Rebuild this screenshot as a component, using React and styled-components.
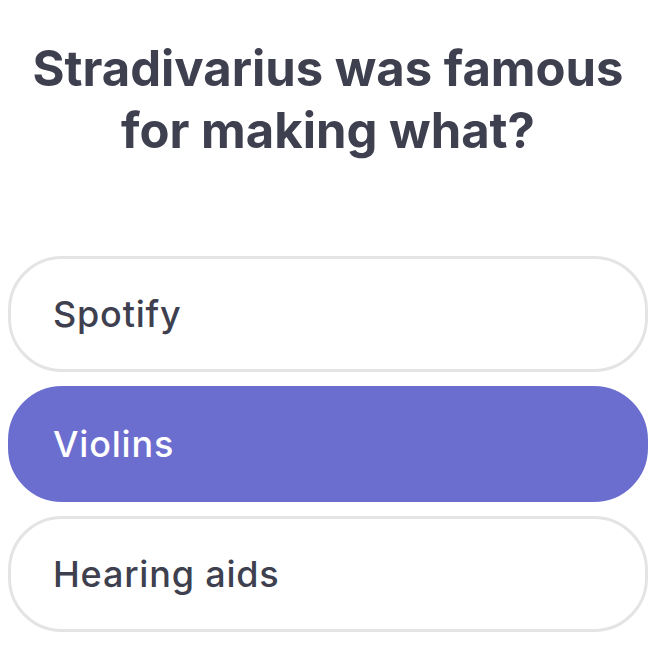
import React, { useState } from "react";
import styled, { createGlobalStyle } from "styled-components";

const GlobalStyle = createGlobalStyle`
  body {
    margin: 0;
    background: #ffffff;
    font-family: "Inter", "Noto Sans", sans-serif;
  }
`;

const answers = ["Spotify", "Violins", "Hearing aids"];

export default function App() {
  const [picked, setPicked] = useState(1);

  return (
    <>
      <GlobalStyle />
      <Quiz>
        <Question>Stradivarius was famous for making what?</Question>
        <AnswerList>
          {answers.map((text, i) => (
            <Answer
              key={text}
              $selected={picked === i}
              onClick={() => setPicked(i)}
            >
              {text}
            </Answer>
          ))}
        </AnswerList>
      </Quiz>
    </>
  );
}

const Quiz = styled.div`
  width: 640px;
  padding: 38px 0 0 8px;
  display: flex;
  flex-direction: column;
`;

const Question = styled.h1`
  margin: 0 auto;
  max-width: 610px;
  text-align: center;
  color: #3e3f4f;
  font-size: 49px;
  line-height: 62px;
  font-weight: 700;
  font-variant-ligatures: none;
`;

const AnswerList = styled.div`
  display: flex;
  flex-direction: column;
  gap: 14px;
  margin-top: 94px;
`;

const Answer = styled.div`
  box-sizing: border-box;
  height: 116px;
  display: flex;
  align-items: center;
  padding-left: 42px;
  border-radius: 54px;
  border: 3px solid ${(p) => (p.$selected ? "#6b6ecf" : "#e4e4e4")};
  background: ${(p) => (p.$selected ? "#6b6ecf" : "#ffffff")};
  color: ${(p) => (p.$selected ? "#ffffff" : "#3e3f4f")};
  font-size: 36px;
  font-weight: 500;
  letter-spacing: 0.8px;
  font-variant-ligatures: none;
  cursor: pointer;
`;
